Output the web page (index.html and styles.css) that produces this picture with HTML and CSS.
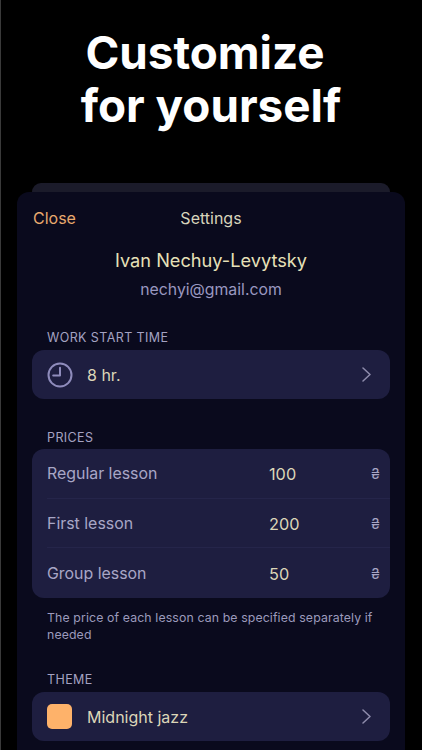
FILE: index.html
```html
<!DOCTYPE html>
<html lang="en">
<head>
<meta charset="utf-8">
<title>Customize for yourself</title>
<link rel="stylesheet" href="styles.css">
</head>
<body>
<main class="screen">
  <h1 class="headline"><span class="headline-first">Customize</span><br>for yourself</h1>
  <div class="sheet-back"></div>
  <section class="sheet">
    <header class="nav">
      <span class="nav-close">Close</span>
      <span class="nav-title">Settings</span>
    </header>
    <div class="profile">
      <div class="profile-name">Ivan Nechuy-Levytsky</div>
      <div class="profile-mail">nechyi@gmail.com</div>
    </div>

    <h2 class="section-label label-work">WORK START TIME</h2>
    <div class="card row">
      <svg class="lead-icon" viewBox="0 0 26 26" fill="none" stroke="#8f8cbc" stroke-width="2" stroke-linecap="round" stroke-linejoin="round"><circle cx="13" cy="13" r="11.5"/><path d="M13 5.8V13.6H6.2"/></svg>
      <span class="row-text">8 hr.</span>
      <svg class="chevron" viewBox="0 0 9 15" fill="none" stroke="#8f8cac" stroke-width="1.5" stroke-linecap="round" stroke-linejoin="round"><path d="M1 1L8 7.5L1 14"/></svg>
    </div>

    <h2 class="section-label label-prices">PRICES</h2>
    <div class="card prices">
      <div class="price-row"><span class="price-name">Regular lesson</span><span class="price-value">100</span><span class="price-cur">₴</span></div>
      <div class="price-row"><span class="price-name">First lesson</span><span class="price-value">200</span><span class="price-cur">₴</span></div>
      <div class="price-row"><span class="price-name">Group lesson</span><span class="price-value">50</span><span class="price-cur">₴</span></div>
    </div>
    <p class="note">The price of each lesson can be specified separately if needed</p>

    <h2 class="section-label label-theme">THEME</h2>
    <div class="card row">
      <span class="swatch"></span>
      <span class="row-text">Midnight jazz</span>
      <svg class="chevron" viewBox="0 0 9 15" fill="none" stroke="#8f8cac" stroke-width="1.5" stroke-linecap="round" stroke-linejoin="round"><path d="M1 1L8 7.5L1 14"/></svg>
    </div>
  </section>
</main>
</body>
</html>
```
FILE: styles.css
```css
* { box-sizing: border-box; }
html, body { margin: 0; padding: 0; background: #000; }
body { height: 750px; overflow: hidden; font-family: Inter, "Noto Sans", sans-serif; }
.screen { height: 750px; overflow: hidden; border-left: 1px solid #3a3a3a; padding-top: 26px; display: flex; flex-direction: column; }
.headline { margin: 0 0 0 -1px; height: 157px; color: #fff; font-size: 45.8px; line-height: 53px; font-weight: 700; text-align: center; }
.headline-first { margin-right: 12px; }
.sheet-back { flex: none; height: 9px; margin: 0 32px 0 31px; background: #1b1b2a; border-radius: 10px 10px 0 0; }
.sheet { flex: 1; margin: 0 17px 0 16px; padding: 0 15px; background: #0a0a1d; border-radius: 12px 12px 0 0; }
.nav { position: relative; height: 52px; display: flex; align-items: center; justify-content: center; font-size: 16px; }
.nav-close { position: absolute; left: 1px; color: #e8a96e; }
.nav-title { color: #d8d4bc; }
.profile { text-align: center; margin-top: 2px; }
.profile-name { color: #e6e0b8; font-size: 18.2px; line-height: 28px; }
.profile-mail { color: #9a98c0; font-size: 15.8px; line-height: 32px; }
.section-label { margin: 0; padding-left: 15px; color: #a4a2c2; font-size: 12.5px; line-height: 16px; font-weight: 400; letter-spacing: 0.4px; }
.label-work { margin-top: 24px; }
.label-prices { margin-top: 31px; }
.label-theme { margin-top: 29px; }
.card { background: #1e1e40; border-radius: 12px; margin-top: 4px; }
.row { height: 49px; display: flex; align-items: center; padding: 0 19px 0 15px; }
.lead-icon { width: 26px; height: 26px; flex: none; }
.swatch { width: 25px; height: 25px; flex: none; background: #feb26a; border-radius: 5px; margin-right: 1px; }
.row-text { flex: 1; margin-left: 14px; color: #dcd6b8; font-size: 16px; }
.chevron { width: 9px; height: 15px; flex: none; }
.prices { padding-left: 15px; margin-top: 3px; }
.price-row { height: 49.7px; display: flex; align-items: center; padding-top: 1px; font-size: 15.9px; border-bottom: 1px solid #25254a; }
.price-row:last-child { border-bottom: 0; }
.price-name { width: 222px; color: #a8a6c6; }
.price-value { flex: 1; color: #dcd6b8; font-size: 16.3px; }
.price-cur { width: 19px; color: #a8a6c6; font-size: 14px; }
.note { margin: 11px 0 0 15px; color: #9c9abc; font-size: 12.3px; line-height: 17px; letter-spacing: 0.12px; }
```
